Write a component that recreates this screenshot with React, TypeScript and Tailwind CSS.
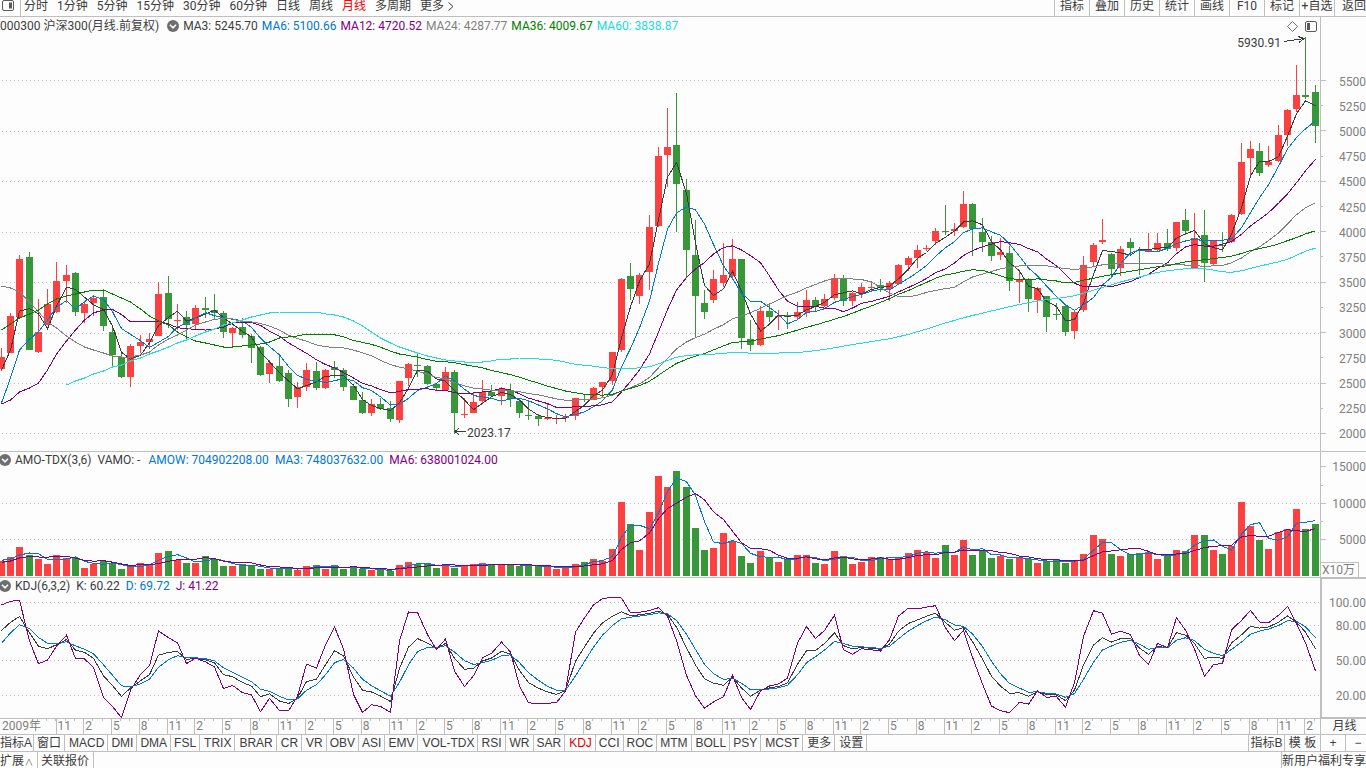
import React from "react";

type Candle = [number, number, number, number, number];

const RED = "#ff4040";
const GREEN = "#389738";
const DARK = "#3c3c3c";
const BLUE = "#0078d0";
const PURPLE = "#800080";
const GRAY = "#808080";
const DEEP_GREEN = "#008000";
const CYAN = "#20dcdc";
const LINE = "#bfbfbf";

const STEP = 9.2515;
const FIRST_X = 1.475;
const CHART_W = 1320;

// up (1) or down (0), high, body top, body bottom, low
const candles: Candle[] = [
  [1, 348, 357, 369, 371], [1, 313, 316, 353, 353], [1, 255, 259, 317, 318], [0, 252, 257, 350, 350],
  [1, 299, 332, 352, 353], [1, 289, 304, 325, 325], [1, 262, 281, 312, 313], [1, 265, 275, 281, 303],
  [0, 272, 273, 312, 316], [1, 302, 304, 313, 323], [1, 295, 298, 303, 316], [0, 289, 297, 326, 331],
  [0, 326, 332, 355, 367], [0, 352, 357, 377, 378], [1, 344, 346, 377, 387], [1, 335, 342, 346, 353],
  [1, 333, 339, 342, 349], [1, 282, 294, 336, 336], [0, 276, 293, 319, 328], [1, 304, 320, 321, 330],
  [0, 311, 317, 325, 340], [1, 305, 308, 324, 330], [0, 297, 308, 310, 318], [0, 294, 310, 313, 319],
  [0, 311, 313, 332, 338], [1, 327, 328, 333, 346], [0, 318, 327, 335, 338], [0, 334, 336, 348, 363],
  [0, 346, 347, 375, 376], [1, 360, 363, 374, 383], [0, 355, 366, 381, 382], [0, 370, 373, 399, 407],
  [1, 382, 387, 397, 408], [1, 363, 370, 387, 391], [0, 362, 371, 388, 390], [1, 369, 370, 388, 389],
  [0, 361, 367, 370, 378], [0, 368, 370, 387, 391], [0, 385, 386, 400, 400], [0, 392, 400, 413, 414],
  [1, 399, 404, 413, 416], [0, 398, 404, 409, 410], [0, 401, 408, 419, 422], [1, 381, 381, 420, 423],
  [1, 363, 364, 378, 386], [0, 354, 365, 366, 377], [0, 365, 366, 384, 385], [0, 383, 384, 388, 390],
  [1, 367, 372, 390, 391], [0, 370, 372, 413, 434], [1, 398, 414, 415, 418], [1, 393, 402, 413, 413],
  [1, 380, 392, 401, 403], [0, 385, 392, 396, 397], [1, 387, 389, 396, 405], [0, 384, 390, 399, 407],
  [0, 399, 401, 413, 418], [0, 400, 415, 416, 420], [0, 414, 416, 419, 426], [1, 404, 418, 419, 420],
  [1, 415, 418, 419, 424], [1, 414, 417, 418, 422], [1, 398, 398, 416, 420], [0, 395, 399, 400, 402],
  [1, 387, 388, 400, 400], [1, 382, 382, 387, 397], [1, 352, 352, 381, 385], [1, 278, 279, 350, 352],
  [0, 263, 276, 289, 300], [1, 273, 275, 296, 304], [1, 215, 227, 272, 290], [1, 147, 156, 226, 227],
  [1, 108, 147, 155, 187], [0, 93, 145, 184, 232], [0, 179, 190, 250, 277], [0, 220, 255, 296, 338],
  [0, 290, 303, 312, 319], [1, 270, 279, 300, 303], [1, 243, 275, 283, 287], [1, 239, 259, 276, 280],
  [0, 259, 259, 338, 349], [0, 320, 339, 345, 351], [1, 306, 311, 345, 346], [0, 303, 311, 317, 322],
  [1, 310, 316, 317, 330], [0, 312, 315, 317, 329], [1, 302, 312, 317, 319], [1, 290, 300, 312, 317],
  [0, 297, 300, 307, 311], [1, 294, 299, 306, 307], [1, 274, 278, 298, 300], [0, 275, 278, 301, 306],
  [1, 292, 293, 301, 306], [1, 283, 287, 294, 298], [1, 283, 287, 288, 292], [0, 279, 285, 288, 292],
  [1, 281, 283, 289, 301], [1, 264, 265, 284, 285], [1, 256, 258, 265, 271], [1, 245, 250, 258, 268],
  [1, 245, 248, 249, 251], [1, 228, 231, 241, 245], [0, 205, 231, 232, 235], [1, 223, 229, 231, 236],
  [1, 191, 204, 227, 228], [0, 203, 204, 229, 256], [0, 218, 232, 242, 252], [0, 236, 242, 256, 261],
  [1, 238, 252, 255, 260], [0, 246, 253, 281, 291], [1, 271, 279, 282, 303], [0, 278, 279, 299, 312],
  [1, 287, 288, 300, 313], [0, 296, 296, 317, 332], [0, 303, 314, 315, 320], [0, 305, 306, 332, 336],
  [1, 310, 312, 331, 339], [1, 256, 265, 310, 312], [1, 243, 245, 262, 267], [1, 219, 240, 242, 244],
  [0, 253, 254, 269, 276], [1, 246, 249, 268, 276], [0, 238, 242, 248, 256], [0, 247, 250, 251, 275],
  [1, 233, 250, 252, 252], [1, 233, 243, 250, 251], [0, 229, 243, 249, 251], [1, 222, 222, 248, 251],
  [0, 209, 220, 231, 235], [1, 213, 238, 268, 269], [0, 210, 235, 263, 282], [1, 240, 241, 264, 266],
  [0, 232, 245, 246, 252], [1, 214, 215, 242, 243], [1, 143, 162, 214, 215], [1, 141, 149, 158, 175],
  [0, 143, 151, 173, 176], [1, 146, 162, 165, 167], [1, 125, 135, 161, 162], [1, 109, 110, 135, 146],
  [1, 65, 95, 109, 112], [0, 37, 95, 97, 99], [0, 85, 92, 126, 143],
];

const volumes = [
  15, 19, 29, 21, 17, 12, 21, 18, 18, 8, 12, 15, 12, 7, 9, 13, 11, 23, 25, 16, 13, 13, 20, 17,
  10, 10, 12, 10, 7, 7, 8, 7, 6, 10, 11, 7, 11, 7, 9, 7, 6, 6, 5, 11, 14, 12, 12, 8,
  12, 8, 11, 12, 13, 11, 12, 11, 10, 10, 10, 9, 7, 8, 12, 14, 17, 15, 27, 74, 52, 26, 64, 100,
  89, 105, 89, 48, 26, 28, 43, 35, 20, 13, 25, 18, 14, 16, 21, 21, 13, 12, 25, 20, 12, 14, 19, 19,
  17, 19, 23, 26, 24, 18, 31, 21, 36, 21, 25, 18, 20, 17, 18, 17, 13, 15, 17, 13, 15, 22, 41, 37,
  22, 20, 22, 23, 24, 17, 20, 26, 25, 41, 41, 26, 22, 30, 74, 50, 36, 27, 44, 47, 67, 47, 52,
];

const closes = candles.map(([up, , top, bottom]) => (up ? top + 0.5 : bottom - 0.5));

// average values from before the first visible month
const maLines = [
  { n: 3, color: DARK, start: 0, seed: [370, 350] },
  { n: 6, color: BLUE, start: 0, seed: [403, 378, 350, 339, 332] },
  { n: 12, color: PURPLE, start: 0, seed: [404, 400, 392, 388, 383, 370, 354, 341, 330, 320, 313] },
  {
    n: 24, color: GRAY, start: 0,
    seed: [286, 288, 292, 302, 312, 322, 328, 336, 342, 347, 350, 353, 356, 357, 357, 355, 352, 345, 339, 335, 330, 325, 322],
  },
  {
    n: 36, color: DEEP_GREEN, start: 0,
    seed: [
      330, 324, 318, 314, 310, 304, 299, 296, 294, 292, 290, 290, 294, 298, 302, 309, 316, 321, 325, 332, 337, 341,
      343, 345, 347, 347, 346, 345, 344, 342, 338, 337, 336, 334, 334,
    ],
  },
  {
    n: 60, color: CYAN, start: 7,
    seed: [
      385, 381, 378, 374, 371, 367, 365, 361, 358, 354, 351, 347, 343, 340, 336, 332, 329, 325, 323, 320, 317, 315,
      313, 312, 312, 312, 312, 312, 314, 315, 317, 321, 326, 332, 338, 343, 347, 350, 353, 356, 358, 360, 361, 362,
      362, 362, 361, 359, 359, 358, 358, 359,
    ],
  },
];

const barX = (i: number) => Math.floor(FIRST_X + i * STEP);

const movingAverage = (data: number[], n: number, seed: number[], start = 0) => {
  const out = [...seed];
  for (let i = start + seed.length; i < data.length; i++) {
    out.push(data.slice(i - n + 1, i + 1).reduce((a, b) => a + b, 0) / n);
  }
  return out;
};

const toPoints = (values: number[], start = 0) =>
  values.map((v, i) => `${barX(i + start) + 0.5},${v.toFixed(2)}`).join(" ");

// KDJ(6,3,2)
const kLine = [76, 83, 88, 74, 62.5];
const dLine = [65];
for (let i = 5; i < candles.length; i++) {
  const win = candles.slice(i - 5, i + 1);
  const high = Math.min(...win.map((c) => c[1])) + 0.5;
  const low = Math.max(...win.map((c) => c[4])) - 0.5;
  const rsv = ((low - closes[i]) / (low - high)) * 100;
  kLine.push((kLine[i - 1] * 2 + rsv) / 3);
}
for (let i = 1; i < candles.length; i++) dLine.push((dLine[i - 1] + kLine[i]) / 2);
const jLine = kLine.map((k, i) => 3 * k - 2 * dLine[i]);
const kdjY = (v: number) => 719.2 - v * 1.167;

const priceLabels = Array.from({ length: 15 }, (_, i) => ({
  text: String(5500 - i * 250),
  y: 80.5 + i * 25.21,
  major: i % 2 === 0,
}));

const periods = ["分时", "1分钟", "5分钟", "15分钟", "30分钟", "60分钟", "日线", "周线", "月线", "多周期"];
const tools = ["指标", "叠加", "历史", "统计", "画线", "F10", "标记", "+自选"];
const indicators = [
  "MACD", "DMI", "DMA", "FSL", "TRIX", "BRAR", "CR", "VR", "OBV", "ASI", "EMV", "VOL-TDX", "RSI", "WR",
  "SAR", "KDJ", "CCI", "ROC", "MTM", "BOLL", "PSY", "MCST",
];
const months = Array.from({ length: 46 }, (_, i) => ["11", "2", "5", "8"][i % 4]);

const Grid = ({ rows }: { rows: number[] }) => (
  <>
    {rows.map((y) => (
      <line key={y} x1={2} x2={CHART_W} y1={y + 0.5} y2={y + 0.5} stroke={LINE} strokeDasharray="1 3" />
    ))}
  </>
);

const Curve = ({ points, color }: { points: string; color: string }) => (
  <polyline points={points} fill="none" stroke={color} strokeWidth={1} />
);

const Canvas = ({ top, height, children }: { top: number; height: number; children: React.ReactNode }) => (
  <svg
    className="block h-full w-full"
    viewBox={`0 ${top} ${CHART_W} ${height}`}
    preserveAspectRatio="none"
    shapeRendering="crispEdges"
  >
    {children}
  </svg>
);

const CollapseButton = () => (
  <button type="button" aria-label="collapse" className="h-3 w-3 shrink-0">
    <svg viewBox="0 0 12 12" className="block h-3 w-3">
      <circle cx="6" cy="6" r="6" fill="#6e6e6e" />
      <path d="M3 4.8 6 7.8 9 4.8" fill="none" stroke="#fff" strokeWidth="1.6" />
    </svg>
  </button>
);

const AxisLabel = ({ text, y, top, height }: { text: string; y: number; top: number; height: number }) => (
  <span
    className="absolute right-0 -translate-y-1/2 leading-3 text-[#808080]"
    style={{ top: `${((y - top) / height) * 100}%` }}
  >
    {text}
  </span>
);

const Tick = ({ y, top, height, major }: { y: number; top: number; height: number; major: boolean }) => (
  <span
    className={major ? "absolute left-0 h-px w-[5px] bg-[#bfbfbf]" : "absolute left-0 h-px w-[2px] bg-[#bfbfbf]"}
    style={{ top: `${((Math.floor(y) - top) / height) * 100}%` }}
  />
);

const Toolbar = () => (
  <header className="flex h-[17px] shrink-0 items-stretch justify-between overflow-hidden border-b border-[#bfbfbf] leading-[13px]">
    <nav className="flex">
      <button type="button" aria-label="sidebar" className="flex w-[21px] items-start border-r border-[#bfbfbf] pl-[2px]">
        <svg viewBox="0 0 12 11" className="h-[11px] w-3">
          <rect x="0.5" y="0.5" width="11" height="10" rx="1.5" fill="none" stroke="#5a5a5a" />
          <rect x="7" y="2.5" width="3" height="6" fill="#5a5a5a" />
        </svg>
      </button>
      <div className="flex items-start gap-[9px] pl-[3px]">
        {periods.map((p) => (
          <button key={p} type="button" className={p === "月线" ? "text-[#ff0000]" : ""}>
            {p}
          </button>
        ))}
        <button type="button" className="flex items-center gap-1">
          更多
          <svg viewBox="0 0 6 9" className="h-[9px] w-[6px]" fill="none" stroke={DARK}>
            <path d="M0.5 0.5 5 4.5 0.5 8.5" />
          </svg>
        </button>
      </div>
    </nav>
    <nav className="flex">
      {tools.map((t) => (
        <button key={t} type="button" className="flex w-[35px] items-start justify-center border-l border-[#bfbfbf] whitespace-nowrap">
          {t}
        </button>
      ))}
      <button type="button" className="flex w-8 items-start justify-end border-l border-[#bfbfbf] whitespace-nowrap">
        返回
      </button>
    </nav>
  </header>
);

const PriceChart = () => (
  <section className="flex min-h-0 flex-1 border-b border-[#bfbfbf]">
    <div className="relative min-w-0 flex-1">
      <Canvas top={17} height={434}>
        <Grid rows={[80, 131, 181, 232, 282, 333, 383, 433]} />
        {candles.map(([up, high, top, bottom, low], i) => (
          <g key={i} fill={up ? RED : GREEN}>
            <rect x={barX(i)} y={high} width={1} height={low - high} />
            <rect x={barX(i) - 3} y={top} width={7} height={bottom - top} />
          </g>
        ))}
        {maLines.map((m) => (
          <Curve key={m.n} color={m.color} points={toPoints(movingAverage(closes, m.n, m.seed, m.start), m.start)} />
        ))}
        <path d="M1284 41.5 1304 38.5M1298 36.5 1304 38.5 1299 42.5" fill="none" stroke={DARK} />
        <path d="M466 431.5H455M459 428 455 431.5 459 435" fill="none" stroke={DARK} />
      </Canvas>
      <div className="absolute top-[3px] left-0 flex items-center leading-3 whitespace-nowrap">
        <h1>000300 沪深300(月线.前复权)</h1>
        <div className="mr-1 ml-2 flex">
          <CollapseButton />
        </div>
        <div className="flex gap-1">
          <span>MA3: 5245.70</span>
          <span className="text-[#0078d0]">MA6: 5100.66</span>
          <span className="text-[#800080]">MA12: 4720.52</span>
          <span className="text-[#808080]">MA24: 4287.77</span>
          <span className="text-[#008000]">MA36: 4009.67</span>
          <span className="text-[#20dcdc]">MA60: 3838.87</span>
        </div>
      </div>
      <div className="absolute top-1 right-[3px] flex items-center gap-[7px]">
        <svg viewBox="0 0 11 11" className="h-[11px] w-[11px]">
          <path d="M5.5 0.5 10.5 5.5 5.5 10.5 0.5 5.5Z" fill="none" stroke="#6e6e6e" />
        </svg>
        <svg viewBox="0 0 12 11" className="h-[11px] w-3">
          <rect x="0.5" y="0.5" width="11" height="10" rx="1.5" fill="none" stroke="#5a5a5a" />
          <rect x="2" y="2" width="3" height="7" fill="#5a5a5a" />
        </svg>
      </div>
      <span className="absolute top-5 right-[39px] leading-3">5930.91</span>
      <span className="absolute bottom-3 leading-3" style={{ left: `${(467 / CHART_W) * 100}%` }}>
        2023.17
      </span>
    </div>
    <div className="relative w-[46px] border-l border-[#bfbfbf]">
      {priceLabels.map((l) => (
        <React.Fragment key={l.text}>
          <Tick y={l.y} top={17} height={434} major={l.major} />
          <AxisLabel text={l.text} y={l.y + 1} top={17} height={434} />
        </React.Fragment>
      ))}
    </div>
  </section>
);

const VolumeChart = () => {
  const ma3 = movingAverage(volumes, 3, [15.7, 17]).map((v) => 576 - v);
  const ma6 = movingAverage(volumes, 6, [13.7, 15, 18, 19.5, 19]).map((v) => 576 - v);

  return (
    <section className="flex h-[126px] shrink-0 border-b border-[#bfbfbf]">
      <div className="relative min-w-0 flex-1">
        <Canvas top={452} height={125}>
          <Grid rows={[503, 539]} />
          {volumes.map((v, i) => (
            <rect key={i} x={barX(i) - 3} y={576 - v} width={7} height={v} fill={candles[i][0] ? RED : GREEN} />
          ))}
          <Curve points={toPoints(ma3)} color={BLUE} />
          <Curve points={toPoints(ma6)} color={PURPLE} />
        </Canvas>
        <div className="absolute top-[2px] -left-px flex items-center gap-1 leading-3 whitespace-nowrap">
          <CollapseButton />
          <div className="flex gap-[6px]">
            <span>AMO-TDX(3,6)</span>
            <span>VAMO: -</span>
            <span className="pl-[2px] text-[#0078d0]">AMOW: 704902208.00</span>
            <span className="text-[#0078d0]">MA3: 748037632.00</span>
            <span className="text-[#800080]">MA6: 638001024.00</span>
          </div>
        </div>
      </div>
      <div className="relative w-[46px] border-l border-[#bfbfbf]">
        {[466, 485, 503, 521, 539].map((y, i) => (
          <Tick key={y} y={y} top={452} height={125} major={i % 2 === 0} />
        ))}
        <AxisLabel text="15000" y={467} top={452} height={125} />
        <AxisLabel text="10000" y={504} top={452} height={125} />
        <AxisLabel text="5000" y={540} top={452} height={125} />
        <span className="absolute bottom-0 left-0 h-[15px] w-[38px] border-t border-r border-[#bfbfbf] pl-px leading-[14px] whitespace-nowrap text-[#808080]">
          X10万
        </span>
      </div>
    </section>
  );
};

const KdjChart = () => (
  <section className="flex h-[141px] shrink-0 border-b border-[#bfbfbf]">
    <div className="relative min-w-0 flex-1">
      <Canvas top={578} height={140}>
        <Grid rows={[602, 625, 660, 695]} />
        <Curve points={toPoints(kLine.map(kdjY))} color={DARK} />
        <Curve points={toPoints(dLine.map(kdjY))} color={BLUE} />
        <Curve points={toPoints(jLine.map(kdjY))} color={PURPLE} />
      </Canvas>
      <div className="absolute top-[2px] -left-px flex items-center gap-1 leading-3 whitespace-nowrap">
        <CollapseButton />
        <div className="flex gap-[6px]">
          <span>KDJ(6,3,2)</span>
          <span>K: 60.22</span>
          <span className="text-[#0078d0]">D: 69.72</span>
          <span className="text-[#800080]">J: 41.22</span>
        </div>
      </div>
    </div>
    <div className="relative w-[46px] border-y border-l-2 border-[#bfbfbf]">
      <AxisLabel text="100.00" y={603} top={579} height={138} />
      <AxisLabel text="80.00" y={626} top={579} height={138} />
      <AxisLabel text="50.00" y={661} top={579} height={138} />
      <AxisLabel text="20.00" y={696} top={579} height={138} />
    </div>
  </section>
);

const TimeAxis = () => (
  <div className="flex h-4 shrink-0 border-b border-[#bfbfbf] leading-[15px]">
    <div className="relative flex min-w-0 flex-1 overflow-hidden text-[#808080]">
      <svg
        className="absolute top-0 left-0 h-[2px] w-full"
        viewBox={`0 0 ${CHART_W} 2`}
        preserveAspectRatio="none"
        shapeRendering="crispEdges"
      >
        {candles.map((_, i) => i > 3 && <rect key={i} x={barX(i) - 1} y={0} width={1} height={2} fill={LINE} />)}
      </svg>
      <span className="shrink-0 pl-[2px] whitespace-nowrap" style={{ width: `${(55.5 / CHART_W) * 100}%` }}>
        2009年
      </span>
      {months.map((m, i) => (
        <span
          key={i}
          className="shrink-0 border-l border-[#bfbfbf] pl-px"
          style={{ width: `${((i === months.length - 1 ? 16 : STEP * 3) / CHART_W) * 100}%` }}
        >
          {m}
        </span>
      ))}
    </div>
    <button type="button" className="w-[46px] border-l border-[#bfbfbf] pl-[2px] text-center">
      月线
    </button>
  </div>
);

const IndicatorTabs = () => (
  <nav className="flex h-[17px] shrink-0 justify-between border-b border-[#bfbfbf] font-['Liberation_Sans','Noto_Sans_CJK_SC',sans-serif] leading-4 whitespace-nowrap">
    <div className="flex">
      <button type="button" className="border-r border-[#bfbfbf] pr-px">
        指标A
      </button>
      <button type="button" className="border-r border-[#bfbfbf] px-[3px]">
        窗口
      </button>
      {indicators.map((name) => (
        <button
          key={name}
          type="button"
          className={
            name === "KDJ"
              ? "border-r border-[#bfbfbf] pr-[3px] pl-1 text-[#e00000]"
              : name.length === 3
                ? "border-r border-[#bfbfbf] px-[3px]"
                : "border-r border-[#bfbfbf] pr-[3px] pl-1"
          }
        >
          {name}
        </button>
      ))}
      <button type="button" className="border-r border-[#bfbfbf] pr-[3px] pl-1">
        更多
      </button>
      <button type="button" className="border-r border-[#bfbfbf] pr-[3px] pl-1">
        设置
      </button>
    </div>
    <div className="flex">
      <button type="button" className="w-9 border-l border-[#bfbfbf]">
        指标B
      </button>
      <button type="button" className="w-9 border-l border-[#bfbfbf]">
        模 板
      </button>
      <button type="button" className="w-[25px] border-l border-[#bfbfbf]">
        +
      </button>
      <button type="button" className="w-[21px] border-l border-[#bfbfbf] pl-1">
        −
      </button>
    </div>
  </nav>
);

const BottomBar = () => (
  <footer className="flex h-4 shrink-0 justify-between overflow-hidden leading-[18px] whitespace-nowrap">
    <div className="flex">
      <button type="button" className="flex w-[38px] items-start border-r border-[#bfbfbf]">
        扩展
        <svg viewBox="0 0 8 8" className="mt-[6px] ml-px h-2 w-2" fill="none" stroke="#999">
          <path d="M1 7.5 4 1 7 7.5" />
        </svg>
      </button>
      <button type="button" className="flex w-14 items-start border-r border-[#bfbfbf] pl-[3px]">
        关联报价
      </button>
    </div>
    <a href="#" className="border-l border-[#bfbfbf]">
      新用户福利专享
    </a>
  </footer>
);

export default function App() {
  return (
    <main className="flex h-screen flex-col overflow-hidden bg-[#fdfdfd] font-[Roboto,'Noto_Sans_CJK_SC',sans-serif] text-xs text-[#3c3c3c]">
      <Toolbar />
      <PriceChart />
      <VolumeChart />
      <KdjChart />
      <TimeAxis />
      <IndicatorTabs />
      <BottomBar />
    </main>
  );
}
